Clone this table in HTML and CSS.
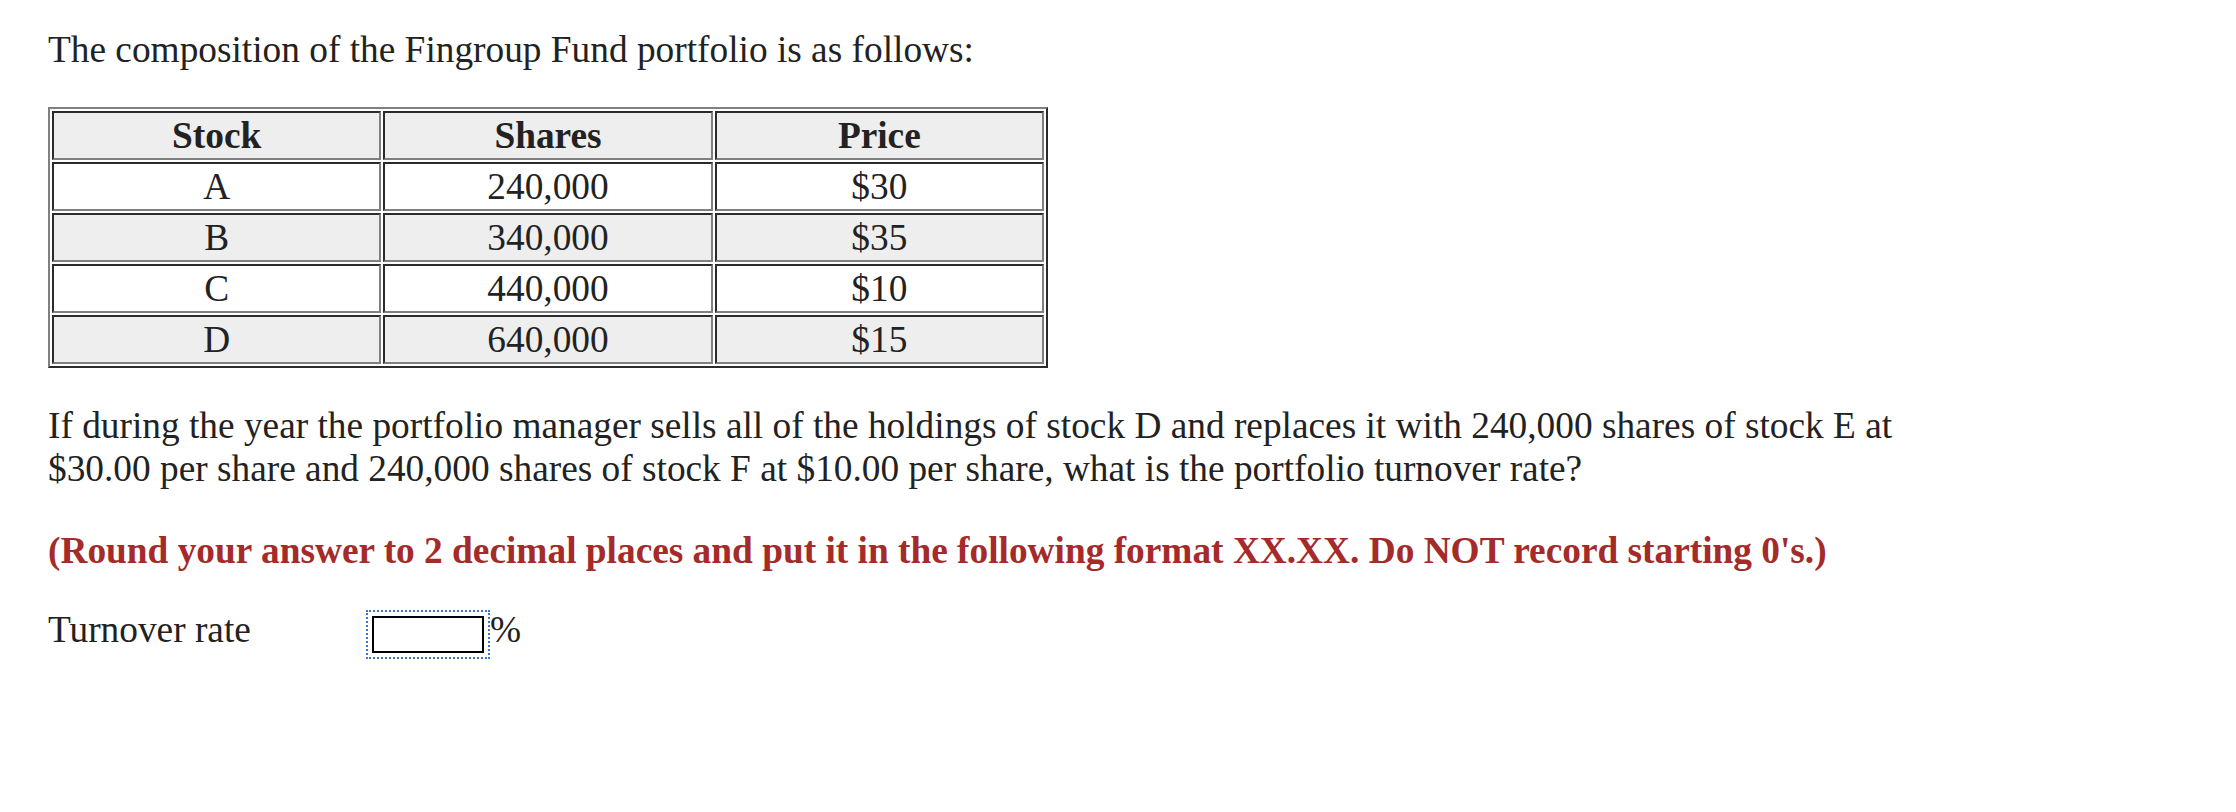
FILE: index.html
```html
<!DOCTYPE html>
<html>
<head>
<meta charset="utf-8">
<link rel="stylesheet" href="styles.css">
</head>
<body>
<div class="page">
  <p class="intro">The composition of the Fingroup Fund portfolio is as follows:</p>
  <table class="data">
    <tr class="head"><th>Stock</th><th>Shares</th><th>Price</th></tr>
    <tr><td>A</td><td>240,000</td><td>$30</td></tr>
    <tr class="alt"><td>B</td><td>340,000</td><td>$35</td></tr>
    <tr><td>C</td><td>440,000</td><td>$10</td></tr>
    <tr class="alt"><td>D</td><td>640,000</td><td>$15</td></tr>
  </table>
  <p class="question">If during the year the portfolio manager sells all of the holdings of stock D and replaces it with 240,000 shares of stock E at $30.00 per share and 240,000 shares of stock F at $10.00 per share, what is the portfolio turnover rate?</p>
  <p class="note">(Round your answer to 2 decimal places and put it in the following format XX.XX. Do NOT record starting 0's.)</p>
  <div class="answer">
    <span class="label">Turnover rate</span>
    <span class="field"><input class="box" type="text"></span>
    <span class="unit">%</span>
  </div>
</div>
</body>
</html>
```

FILE: styles.css
```css
html, body {
  margin: 0;
  padding: 0;
  background: #ffffff;
}
.page {
  padding: 28px 48px 0 48px;
  font-family: "Liberation Serif", "Times New Roman", serif;
  font-size: 37.35px;
  color: #222222;
}
.intro {
  margin: 0 0 36px 0;
}
.data {
  width: 1000px;
  border-collapse: separate;
  border-spacing: 2px;
  border-style: solid;
  border-width: 2px;
  border-color: #808080 #2b2b2b #2b2b2b #808080;
  font-size: 37.35px;
}
.data th, .data td {
  border-style: solid;
  border-width: 2px;
  border-color: #2b2b2b #808080 #808080 #2b2b2b;
  padding: 1px;
  height: 41px;
  text-align: center;
  width: 33.33%;
}
.data th {
  font-weight: bold;
}
.head th, .alt td {
  background: #eeeeee;
}
.question {
  width: 1900px;
  margin: 36px 0 0 0;
}
.note {
  margin: 39px 0 0 0;
  color: #a52a2a;
  font-weight: bold;
}
.answer {
  display: flex;
  align-items: flex-start;
  margin-top: 36px;
}
.label {
  width: 318px;
}
.field {
  margin-top: 2px;
  border: 2px dotted #3f74c4;
  padding: 4px 4px 4px 4px;
  display: flex;
}
.box {
  box-sizing: border-box;
  width: 112px;
  height: 37px;
  border: 2px solid #000000;
  margin: 0;
  padding: 0;
  background: #ffffff;
  outline: none;
}
```
